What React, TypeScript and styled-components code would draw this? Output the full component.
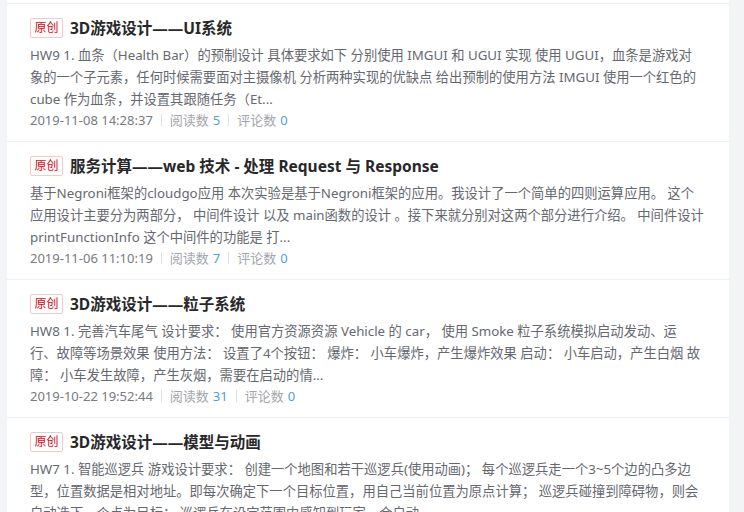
import React from "react";
import styled, { createGlobalStyle } from "styled-components";

const Global = createGlobalStyle`
  html, body { margin: 0; padding: 0; background: #f3f4f6; }
  body { font-family: "Noto Sans", "Noto Sans CJK SC", sans-serif; }
  * { box-sizing: border-box; }
`;

const Page = styled.div`
  width: 744px;
  height: 512px;
  overflow: hidden;
  padding: 0 15px 0 7px;
  background: #f3f4f6;
`;

const List = styled.div`
  background: #ffffff;
  padding-top: 3px;
  display: flex;
  flex-direction: column;
`;

const Item = styled.article`
  border-top: 1px solid #eeeff1;
  padding: 12px 24px 11px 23px;
  display: flex;
  flex-direction: column;
`;

const TitleRow = styled.h4`
  margin: 0;
  display: flex;
  align-items: center;
  height: 24px;
  font-size: 15.5px;
  line-height: 24px;
  font-weight: 700;
  color: #28282a;
  white-space: nowrap;
`;

const Badge = styled.span`
  display: inline-flex;
  align-items: center;
  justify-content: center;
  width: 33px;
  height: 20px;
  margin-right: 7px;
  border: 1px solid #f1c9c9;
  border-radius: 2px;
  font-size: 12px;
  font-weight: 400;
  color: #ca0c16;
  background: #fff;
`;

const Desc = styled.p`
  margin: 4px 0 0;
  font-size: 13.3px;
  line-height: 22px;
  color: #666870;
`;

const Line = styled.span`
  display: block;
  white-space: nowrap;
  height: 22px;
`;

const Meta = styled.div`
  display: flex;
  align-items: center;
  height: 20px;
  font-size: 13px;
  line-height: 20px;
  color: #777a80;
  white-space: nowrap;
`;

const Label = styled.span`
  color: #a3a5ab;
`;

const Num = styled.span`
  color: #4ea1db;
  margin-left: 4px;
`;

const Bar = styled.span`
  width: 1px;
  height: 12px;
  background: #e0e1e5;
  margin: 0 8px;
`;

type Post = {
  title: string;
  lines: string[];
  date: string;
  reads: number;
  comments: number;
};

const posts: Post[] = [
  {
    title: "3D游戏设计——UI系统",
    lines: [
      "HW9 1. 血条（Health Bar）的预制设计 具体要求如下 分别使用 IMGUI 和 UGUI 实现 使用 UGUI，血条是游戏对",
      "象的一个子元素，任何时候需要面对主摄像机 分析两种实现的优缺点 给出预制的使用方法 IMGUI 使用一个红色的",
      "cube 作为血条，并设置其跟随任务（Et...",
    ],
    date: "2019-11-08 14:28:37",
    reads: 5,
    comments: 0,
  },
  {
    title: "服务计算——web 技术 - 处理 Request 与 Response",
    lines: [
      "基于Negroni框架的cloudgo应用 本次实验是基于Negroni框架的应用。我设计了一个简单的四则运算应用。 这个",
      "应用设计主要分为两部分， 中间件设计 以及 main函数的设计 。接下来就分别对这两个部分进行介绍。 中间件设计",
      "printFunctionInfo 这个中间件的功能是 打...",
    ],
    date: "2019-11-06 11:10:19",
    reads: 7,
    comments: 0,
  },
  {
    title: "3D游戏设计——粒子系统",
    lines: [
      "HW8 1. 完善汽车尾气 设计要求： 使用官方资源资源 Vehicle 的 car， 使用 Smoke 粒子系统模拟启动发动、运",
      "行、故障等场景效果 使用方法： 设置了4个按钮： 爆炸： 小车爆炸，产生爆炸效果 启动： 小车启动，产生白烟 故",
      "障： 小车发生故障，产生灰烟，需要在启动的情...",
    ],
    date: "2019-10-22 19:52:44",
    reads: 31,
    comments: 0,
  },
  {
    title: "3D游戏设计——模型与动画",
    lines: [
      "HW7 1. 智能巡逻兵 游戏设计要求： 创建一个地图和若干巡逻兵(使用动画)； 每个巡逻兵走一个3~5个边的凸多边",
      "型，位置数据是相对地址。即每次确定下一个目标位置，用自己当前位置为原点计算； 巡逻兵碰撞到障碍物，则会",
      "自动选下一个点为目标； 巡逻兵在设定范围内感知到玩家，会自动...",
    ],
    date: "2019-10-15 20:31:06",
    reads: 24,
    comments: 0,
  },
];

export default function App() {
  return (
    <>
      <Global />
      <Page>
        <List>
          {posts.map((p) => (
            <Item key={p.title}>
              <TitleRow>
                <Badge>原创</Badge>
                {p.title}
              </TitleRow>
              <Desc>
                {p.lines.map((l) => (
                  <Line key={l}>{l}</Line>
                ))}
              </Desc>
              <Meta>
                <span>{p.date}</span>
                <Bar />
                <Label>阅读数</Label>
                <Num>{p.reads}</Num>
                <Bar />
                <Label>评论数</Label>
                <Num>{p.comments}</Num>
              </Meta>
            </Item>
          ))}
        </List>
      </Page>
    </>
  );
}
